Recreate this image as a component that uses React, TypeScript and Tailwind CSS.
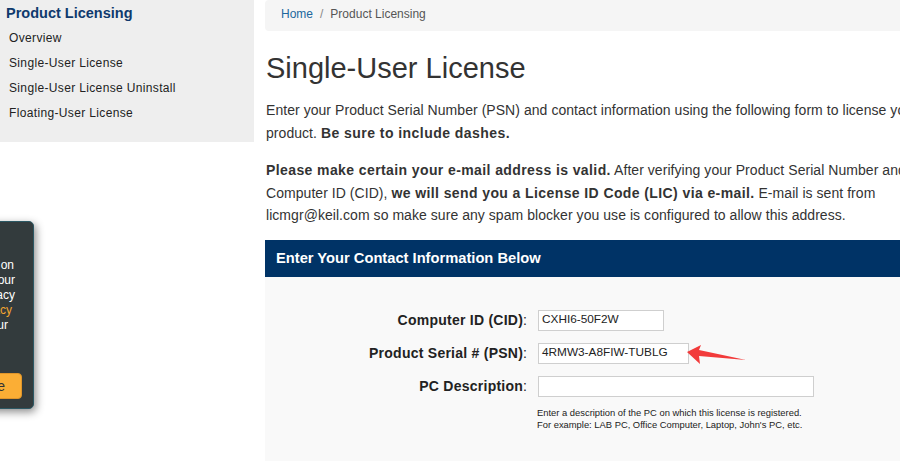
import React from "react";

function Arrow() {
  return (
    <svg
      className="absolute left-[680px] top-[338px]"
      width="75"
      height="32"
      viewBox="0 0 75 32"
    >
      <polygon
        points="7,14 21,7 19,12 66,22 19,18 20,26"
        fill="#f23b3b"
      />
    </svg>
  );
}

function CookiePopup() {
  return (
    <div className="absolute left-[-266px] top-[221px] w-[300px] h-[188px] bg-[#333b3d] border border-[#2c5864] rounded-[5px] shadow-[2px_3px_8px_rgba(0,0,0,0.45)] overflow-hidden text-[12px] leading-[15px] text-white">
      <div className="pt-[36px] flex flex-col">
        <div className="whitespace-nowrap text-right pr-[19px]">This site uses cookies to store information on</div>
        <div className="whitespace-nowrap text-right pr-[18px]">your computer. By continuing to use our</div>
        <div className="whitespace-nowrap text-right pr-[18px]">site, you consent to our cookies. Our privacy</div>
        <div className="whitespace-nowrap text-right pr-[21px]">
          see our <span className="text-[#f4a62f]">privacy</span>
        </div>
        <div className="whitespace-nowrap text-right pr-[25px]">statement for more information about your</div>
        <div className="h-[15px]" />
        <div className="flex justify-end pr-[11px] mt-[25px]">
          <div className="h-[26px] px-[16px] flex items-center bg-[#fbae35] border border-[#e0952a] rounded-[4px] text-[14px] text-[#333]">
            Agree
          </div>
        </div>
      </div>
    </div>
  );
}

function Row({
  label,
  value,
  width,
  first,
}: {
  label: string;
  value: string;
  width: string;
  first?: boolean;
}) {
  return (
    <div className={"flex items-center h-[21px] " + (first ? "" : "mt-[12px]")}>
      <div className="w-[262px] text-right whitespace-nowrap text-[14px] text-[#222]">
        <span className="font-bold tracking-[0.25px]">{label}</span>
        <span>:</span>
      </div>
      <div
        className={
          "ml-[11px] h-[21px] border border-[#cfcfcf] bg-white pl-[3px] flex items-center text-[11.8px] text-[#222] " +
          width
        }
      >
        {value}
      </div>
    </div>
  );
}

export default function App() {
  return (
    <div className="relative w-[900px] h-[461px] overflow-hidden bg-white font-['Liberation_Sans',Arial,sans-serif] text-[#333]">
      <div className="flex items-start">
        {/* Sidebar */}
        <div className="w-[254px] h-[142px] shrink-0 bg-[#eeeeee]">
          <div className="h-[26px] pt-[4px] pl-[6px] leading-[18px] text-[14.5px] font-bold text-[#0f3a6d]">
            Product Licensing
          </div>
          {[
            "Overview",
            "Single-User License",
            "Single-User License Uninstall",
            "Floating-User License",
          ].map((t) => (
            <div key={t} className="h-[25px] leading-[25px] pl-[9px] text-[12px] tracking-[0.35px] text-[#222]">
              {t}
            </div>
          ))}
        </div>

        {/* Main */}
        <div className="ml-[11px] w-[680px] shrink-0">
          <div className="h-[31px] bg-[#f5f5f5] rounded-[4px] pl-[16px] pt-[7px] leading-[14px] text-[12px] flex">
            <span className="text-[#21679d]">Home</span>
            <span className="mx-[7px] text-[#888]">/</span>
            <span className="text-[#555]">Product Licensing</span>
          </div>

          <h1 className="mt-[21px] text-[29px] leading-[32px] font-normal text-[#333] pl-[1px]">
            Single-User License
          </h1>

          <p className="mt-[15px] text-[14px] leading-[22.5px] text-[#333] pl-[1px] tracking-[0.05px]">
            Enter your Product Serial Number (PSN) and contact information using the following form to license your
            product. <b className="tracking-[0.45px]">Be sure to include dashes.</b>
          </p>

          <p className="mt-[15px] text-[14px] leading-[22.5px] text-[#333] pl-[1px] tracking-[0.05px]">
            <b className="tracking-[0.4px]">Please make certain your e-mail address is valid.</b> After verifying your
            Product Serial Number and Computer ID (CID),{" "}
            <b className="tracking-[0.4px]">we will send you a License ID Code (LIC) via e-mail.</b> E-mail is sent from
            licmgr@keil.com so make sure any spam blocker you use is configured to allow this address.
          </p>

          <div className="mt-[13px] h-[37px] bg-[#003366] pl-[11px] flex items-center text-white font-bold text-[14.7px]">
            Enter Your Contact Information Below
          </div>

          <div className="bg-[#f9f9f9] pt-[33px] pb-[60px]">
            <Row first label="Computer ID (CID)" value="CXHI6-50F2W" width="w-[126px]" />
            <Row label="Product Serial # (PSN)" value="4RMW3-A8FIW-TUBLG" width="w-[151px]" />
            <Row label="PC Description" value="" width="w-[276px]" />
            <div className="mt-[10px] ml-[272px] text-[9.4px] leading-[12px] text-[#222]">
              Enter a description of the PC on which this license is registered.
              <br />
              For example: LAB PC, Office Computer, Laptop, John's PC, etc.
            </div>
          </div>
        </div>
      </div>

      <Arrow />
      <CookiePopup />
    </div>
  );
}
